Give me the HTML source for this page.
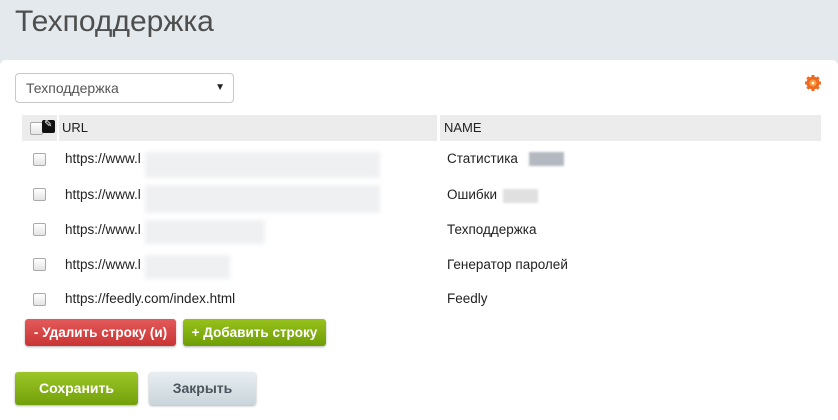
<!DOCTYPE html>
<html><head><meta charset="utf-8"><style>
body{margin:0;width:838px;height:420px;background:#e3e9ec;font-family:"Liberation Sans",Arial,sans-serif;position:relative;overflow:hidden;color:#333}
.a{position:absolute}
h1{position:absolute;left:15px;top:5px;margin:0;font-weight:normal;font-size:30px;color:#4e4e4e}
.panel{position:absolute;left:0;top:60px;width:838px;height:360px;background:#fff;border-radius:6px 6px 0 0}
.sel{left:15px;top:73px;width:217px;height:28px;border:1px solid #c8c8c8;border-radius:4px;font-size:14px;color:#555;line-height:28px;text-indent:10px;background:#fff}
.th{top:115px;height:26px;background:#ececec;font-size:13px;line-height:26px;color:#222}
.cb{width:11px;height:11px;border:1px solid #aaa;border-radius:2px;background:linear-gradient(#fff,#e4e4e4)}
.t{font-size:13.5px;color:#222}
.blur{background:#eff0f2;filter:blur(2px)}
.btn{font-weight:bold;font-size:13.5px;color:#fff;text-align:center;border-radius:3px;box-shadow:0 1px 2px rgba(0,0,0,.3)}
</style></head><body>
<h1>Техподдержка</h1>
<div class="panel"></div>
<div class="a sel">Техподдержка<span style="position:absolute;right:8px;font-size:10px;color:#222">▼</span></div>
<svg class="a" style="left:804px;top:74px" width="18" height="18" viewBox="0 0 18 18"><g fill="#ee6a22"><circle cx="9" cy="9" r="6.5"/><rect x="7.5" y="1" width="3" height="16"/><rect x="1" y="7.5" width="16" height="3"/><rect x="7.5" y="1" width="3" height="16" transform="rotate(45 9 9)"/><rect x="7.5" y="1" width="3" height="16" transform="rotate(-45 9 9)"/></g><circle cx="9" cy="9" r="3.5" fill="#f7a046"/><circle cx="9" cy="9" r="1.3" fill="#fff"/></svg>
<div class="a th" style="left:22px;width:35px"></div>
<div class="a cb" style="left:30px;top:122px"></div>
<div class="a" style="left:42px;top:120px;width:13px;height:13px;background:#111;border-radius:2px"><span style="color:#fff;font-size:10px;position:absolute;left:2px;top:-1px">✎</span></div>
<div class="a th" style="left:59px;width:378px;text-indent:3px">URL</div>
<div class="a th" style="left:440px;width:381px;text-indent:4px">NAME</div>

<div class="a cb" style="left:33px;top:153px"></div><div class="a t" style="left:65px;top:151px">https://www.l</div><div class="a blur" style="left:145px;top:152px;width:235px;height:26px"></div><div class="a t" style="left:447px;top:151px">Статистика</div><div class="a" style="left:529px;top:152px;width:35px;height:14px;background:#b4b8c0;filter:blur(1px)"></div>
<div class="a cb" style="left:33px;top:188px"></div><div class="a t" style="left:65px;top:187px">https://www.l</div><div class="a blur" style="left:145px;top:185px;width:235px;height:28px"></div><div class="a t" style="left:447px;top:187px">Ошибки</div><div class="a" style="left:503px;top:189px;width:35px;height:14px;background:#e0e0e0;filter:blur(1px)"></div>
<div class="a cb" style="left:33px;top:223px"></div><div class="a t" style="left:65px;top:222px">https://www.l</div><div class="a blur" style="left:145px;top:220px;width:120px;height:24px"></div><div class="a t" style="left:447px;top:222px">Техподдержка</div>
<div class="a cb" style="left:33px;top:258px"></div><div class="a t" style="left:65px;top:257px">https://www.l</div><div class="a blur" style="left:145px;top:255px;width:85px;height:24px"></div><div class="a t" style="left:447px;top:257px">Генератор паролей</div>
<div class="a cb" style="left:33px;top:293px"></div><div class="a t" style="left:65px;top:291px">https://feedly.com/index.html</div><div class="a t" style="left:447px;top:291px">Feedly</div>

<div class="a btn" style="left:25px;top:319px;width:151px;height:27px;line-height:27px;background:linear-gradient(#e45a5a,#c93434)">- Удалить строку (и)</div>
<div class="a btn" style="left:183px;top:319px;width:143px;height:27px;line-height:27px;background:linear-gradient(#97c21c,#6f9d06)">+ Добавить строку</div>
<div class="a btn" style="left:15px;top:372px;width:123px;height:33px;line-height:33px;font-size:14px;background:linear-gradient(#9cc628,#73a00a)">Сохранить</div>
<div class="a btn" style="left:149px;top:372px;width:107px;height:33px;line-height:33px;font-size:14px;color:#4a545c;background:linear-gradient(#e8eef1,#c9d5db);border:0">Закрыть</div>
</body></html>
